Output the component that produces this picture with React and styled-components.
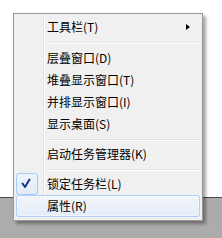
import React from 'react';
import styled, { createGlobalStyle } from 'styled-components';

const GlobalStyle = createGlobalStyle`
  html, body {
    margin: 0;
    padding: 0;
    background: #ffffff;
  }
  body {
    font-family: "Noto Sans CJK SC", "Noto Sans", sans-serif;
  }
`;

const items = [
  { label: '工具栏(T)', submenu: true },
  { separator: true, tall: true },
  { label: '层叠窗口(D)' },
  { label: '堆叠显示窗口(T)' },
  { label: '并排显示窗口(I)' },
  { label: '显示桌面(S)' },
  { separator: true },
  { label: '启动任务管理器(K)' },
  { separator: true },
  { label: '锁定任务栏(L)', checked: true },
  { label: '属性(R)', hover: true },
];

const App = () => (
  <>
    <GlobalStyle />
    <Screen>
      <Desktop />
      <Taskbar />
      <Menu>
        {items.map((item, i) =>
          item.separator ? (
            <Separator key={i} $tall={item.tall} />
          ) : (
            <Item key={i} $hover={item.hover}>
              <IconCell>
                {item.checked && (
                  <CheckBox>
                    <svg width="20" height="20" viewBox="0 0 20 20">
                      <path
                        d="M5.5 9.5 L8 13 L12.5 5.5"
                        fill="none"
                        stroke="#13308a"
                        strokeWidth="1.9"
                        strokeLinecap="round"
                        strokeLinejoin="round"
                      />
                    </svg>
                  </CheckBox>
                )}
              </IconCell>
              <Label>{item.label}</Label>
              {item.submenu && <Arrow />}
            </Item>
          ),
        )}
      </Menu>
    </Screen>
  </>
);

export default App;

const Screen = styled.div`
  position: relative;
  width: 222px;
  height: 238px;
  display: flex;
  flex-direction: column;
  overflow: hidden;
`;

const Desktop = styled.div`
  height: 197px;
  background: #ffffff;
`;

const Taskbar = styled.div`
  flex: 1;
  background: #acacac;
  border-top: 1px solid #4a4a4a;
`;

const Menu = styled.div`
  position: absolute;
  left: 13px;
  top: 13px;
  width: 184px;
  padding: 2px 2px 3px;
  border: 1px solid #979797;
  background:
    linear-gradient(
      to right,
      transparent 29px,
      #e2e3e3 29px,
      #e2e3e3 30px,
      #ffffff 30px,
      #ffffff 31px,
      transparent 31px
    ),
    #f0f0f0;
  box-shadow: 3px 3px 3px rgba(0, 0, 0, 0.35);
  display: flex;
  flex-direction: column;
`;

const Item = styled.div`
  position: relative;
  height: 22px;
  display: flex;
  align-items: center;
  box-sizing: border-box;
  border-radius: 3px;
  border: 1px solid ${({ $hover }) => ($hover ? '#aecff7' : 'transparent')};
  background: ${({ $hover }) =>
    $hover ? 'linear-gradient(to bottom, rgba(242,246,252,0.85), rgba(228,237,250,0.85))' : 'transparent'};
  box-shadow: ${({ $hover }) => ($hover ? 'inset 0 0 0 1px rgba(255,255,255,0.5)' : 'none')};
`;

const IconCell = styled.div`
  width: 27px;
  height: 22px;
  margin: -1px 0 0 -1px;
  flex-shrink: 0;
  display: flex;
`;

const CheckBox = styled.div`
  width: 20px;
  height: 20px;
  border: 1px solid #a8cbf3;
  border-radius: 3px;
  background: linear-gradient(to bottom, #eef3fb, #e3ebf7);
  display: flex;
  align-items: center;
  justify-content: center;
`;

const Label = styled.span`
  flex: 1;
  padding-left: 4px;
  font-size: 12px;
  line-height: 22px;
  color: #000000;
  white-space: nowrap;
`;

const Arrow = styled.span`
  width: 0;
  height: 0;
  margin-right: 9px;
  border-top: 3.5px solid transparent;
  border-bottom: 3.5px solid transparent;
  border-left: 4px solid #000000;
`;

const Separator = styled.div`
  height: ${({ $tall }) => ($tall ? '9px' : '8px')};
  margin-left: 30px;
  box-sizing: border-box;
  padding-top: ${({ $tall }) => ($tall ? '4px' : '4px')};
  &::after {
    content: '';
    display: block;
    height: 1px;
    background: #e2e3e3;
    border-bottom: 1px solid #ffffff;
  }
`;
